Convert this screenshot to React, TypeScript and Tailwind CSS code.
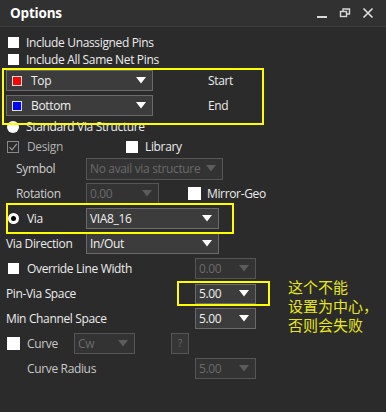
import React from "react";

const font = { fontFamily: '"Open Sans", "Noto Sans CJK SC", sans-serif' };

function Arrow({ disabled }: { disabled?: boolean }) {
  return (
    <svg width="10" height="7" viewBox="0 0 10 7" className="shrink-0">
      <polygon points="0,0 10,0 5,6.5" fill={disabled ? "#5c5c5c" : "#ffffff"} />
    </svg>
  );
}

function Drop({
  w,
  text,
  disabled,
  swatch,
  h = "h-[21px]",
}: {
  w: string;
  text: string;
  disabled?: boolean;
  swatch?: string;
  h?: string;
}) {
  return (
    <div
      className={`${w} ${h} flex items-center border pl-[3px] pr-[6px] ${
        disabled ? "border-[#555555] bg-[#333333] text-[#6a6a6a]" : "border-[#6a6a6a] bg-[#3c3c3c] text-[#f0f0f0]"
      }`}
    >
      {swatch ? (
        <div className="ml-[2px] mr-[9px] h-[10px] w-[10px] shrink-0 border border-[#e0e0e0]" style={{ background: swatch }} />
      ) : null}
      <span className="min-w-0 flex-1 whitespace-nowrap text-[12px] leading-[16px]">{text}</span>
      <Arrow disabled={disabled} />
    </div>
  );
}

function Box() {
  return <div className="h-[11px] w-[11px] shrink-0 bg-white" />;
}

export default function App() {
  return (
    <div
      className="relative h-[412px] w-[386px] overflow-hidden bg-[#2b2b2b] text-[12px] tracking-[-0.35px] text-[#ececec]"
      style={font}
    >
      {/* header */}
      <div className="flex h-[27px] items-center border-b border-[#3e3e3e] bg-[#313131] pl-[10px] pr-[12px]">
        <span className="text-[13.5px] font-bold tracking-[-0.2px] text-white">Options</span>
        <div className="ml-auto flex items-center gap-[11px]">
          <svg width="12" height="12" viewBox="0 0 12 12">
            <rect x="1" y="9" width="10" height="2" fill="#d8d8d8" />
          </svg>
          <svg width="12" height="12" viewBox="0 0 12 12" fill="none" stroke="#d8d8d8" strokeWidth="1.4">
            <rect x="1.5" y="4.5" width="6" height="5" />
            <path d="M4 4.5V2h6.5v5H7.5" />
          </svg>
          <svg width="12" height="12" viewBox="0 0 12 12" stroke="#e0e0e0" strokeWidth="1.6">
            <path d="M1.5 1.5L10.5 10.5M10.5 1.5L1.5 10.5" />
          </svg>
        </div>
      </div>

      <div className="flex flex-col pl-[6px] pt-[7px]">
        <div className="flex h-[17px] items-center pl-[2px]">
          <Box />
          <span className="ml-[7px]">Include Unassigned Pins</span>
        </div>
        <div className="flex h-[17px] items-center pl-[2px]">
          <Box />
          <span className="ml-[7px]">Include All Same Net Pins</span>
        </div>

        <div className="mt-[2px] flex items-center">
          <Drop w="w-[147px]" text="Top" swatch="#ff0000" />
          <span className="ml-[55px]">Start</span>
        </div>
        <div className="mt-[4px] flex items-center">
          <Drop w="w-[147px]" text="Bottom" swatch="#0000ff" />
          <span className="ml-[55px]">End</span>
        </div>

        <div className="flex h-[21px] items-center pl-[1px]">
          <div className="h-[12px] w-[12px] rounded-full bg-white" />
          <span className="ml-[7px]">Standard Via Structure</span>
        </div>

        <div className="flex h-[19px] items-center pl-[1px]">
          <div className="flex h-[12px] w-[12px] shrink-0 items-center justify-center border border-[#8a8a8a]">
            <svg width="10" height="10" viewBox="0 0 10 10" fill="none" stroke="#9a9a9a" strokeWidth="1.2">
              <path d="M1.5 5.2L4 7.8L8.8 1.8" />
            </svg>
          </div>
          <span className="ml-[8px] w-[99px] shrink-0 text-[#b0b0b0]">Design</span>
          <div className="h-[12px] w-[12px] shrink-0 bg-white" />
          <span className="ml-[7px]">Library</span>
        </div>

        <div className="flex h-[25px] items-center">
          <span className="w-[80px] pl-[10px] text-[#d0d0d0]">Symbol</span>
          <Drop w="w-[137px]" h="h-[22px]" text="No avail via structure" disabled />
        </div>
        <div className="flex h-[25px] items-center">
          <span className="w-[80px] pl-[10px] text-[#d0d0d0]">Rotation</span>
          <Drop w="w-[73px]" h="h-[22px]" text="0.00" disabled />
          <div className="ml-[29px] h-[13px] w-[13px] bg-white" />
          <span className="ml-[6px]">Mirror-Geo</span>
        </div>
        <div className="flex h-[25px] items-center">
          <div className="ml-[2px] flex h-[11px] w-[11px] items-center justify-center rounded-full bg-white">
            <div className="h-[5px] w-[5px] rounded-full bg-black" />
          </div>
          <span className="ml-[8px] w-[59px]">Via</span>
          <Drop w="w-[133px]" text="VIA8_16" />
        </div>
        <div className="flex h-[25px] items-center">
          <span className="w-[80px]">Via Direction</span>
          <Drop w="w-[133px]" text="In/Out" />
        </div>
        <div className="flex h-[25px] items-center">
          <div className="ml-[2px] h-[11px] w-[11px] bg-white" />
          <span className="ml-[8px] w-[168px]">Override Line Width</span>
          <Drop w="w-[61px]" text="0.00" disabled />
        </div>
        <div className="flex h-[25px] items-center">
          <span className="w-[189px]">Pin-Via Space</span>
          <Drop w="w-[61px]" h="h-[20px]" text="5.00" />
        </div>
        <div className="flex h-[25px] items-center">
          <span className="w-[189px]">Min Channel Space</span>
          <Drop w="w-[61px]" text="5.00" />
        </div>
        <div className="flex h-[25px] items-center">
          <div className="ml-[1px] h-[13px] w-[13px] bg-white" />
          <span className="ml-[7px] w-[47px] text-[#c8c8c8]">Curve</span>
          <Drop w="w-[61px]" text="Cw" disabled />
          <div className="ml-[36px] flex h-[21px] w-[18px] items-center justify-center border border-[#555555] bg-[#363636] text-[10px] text-[#6a6a6a]">
            ?
          </div>
        </div>
        <div className="flex h-[25px] items-center">
          <span className="w-[189px] pl-[21px] text-[#c8c8c8]">Curve Radius</span>
          <Drop w="w-[61px]" text="5.00" disabled />
        </div>
      </div>

      {/* annotations */}
      <div className="absolute left-[2px] top-[68px] h-[57px] w-[262px] border-2 border-[#ffff00]" />
      <div className="absolute left-[6px] top-[203px] h-[31px] w-[228px] border-2 border-[#ffff00]" />
      <div className="absolute left-[177px] top-[281px] h-[25px] w-[93px] border-2 border-[#ffff00]" />
      <div
        className="absolute left-[288px] top-[277px] text-[15px] leading-[19px] tracking-normal text-[#e6e619]"
        style={{ fontFamily: '"Noto Sans CJK SC", sans-serif' }}
      >
        <div>这个不能</div>
        <div>设置为中心，</div>
        <div>否则会失败</div>
      </div>
    </div>
  );
}
